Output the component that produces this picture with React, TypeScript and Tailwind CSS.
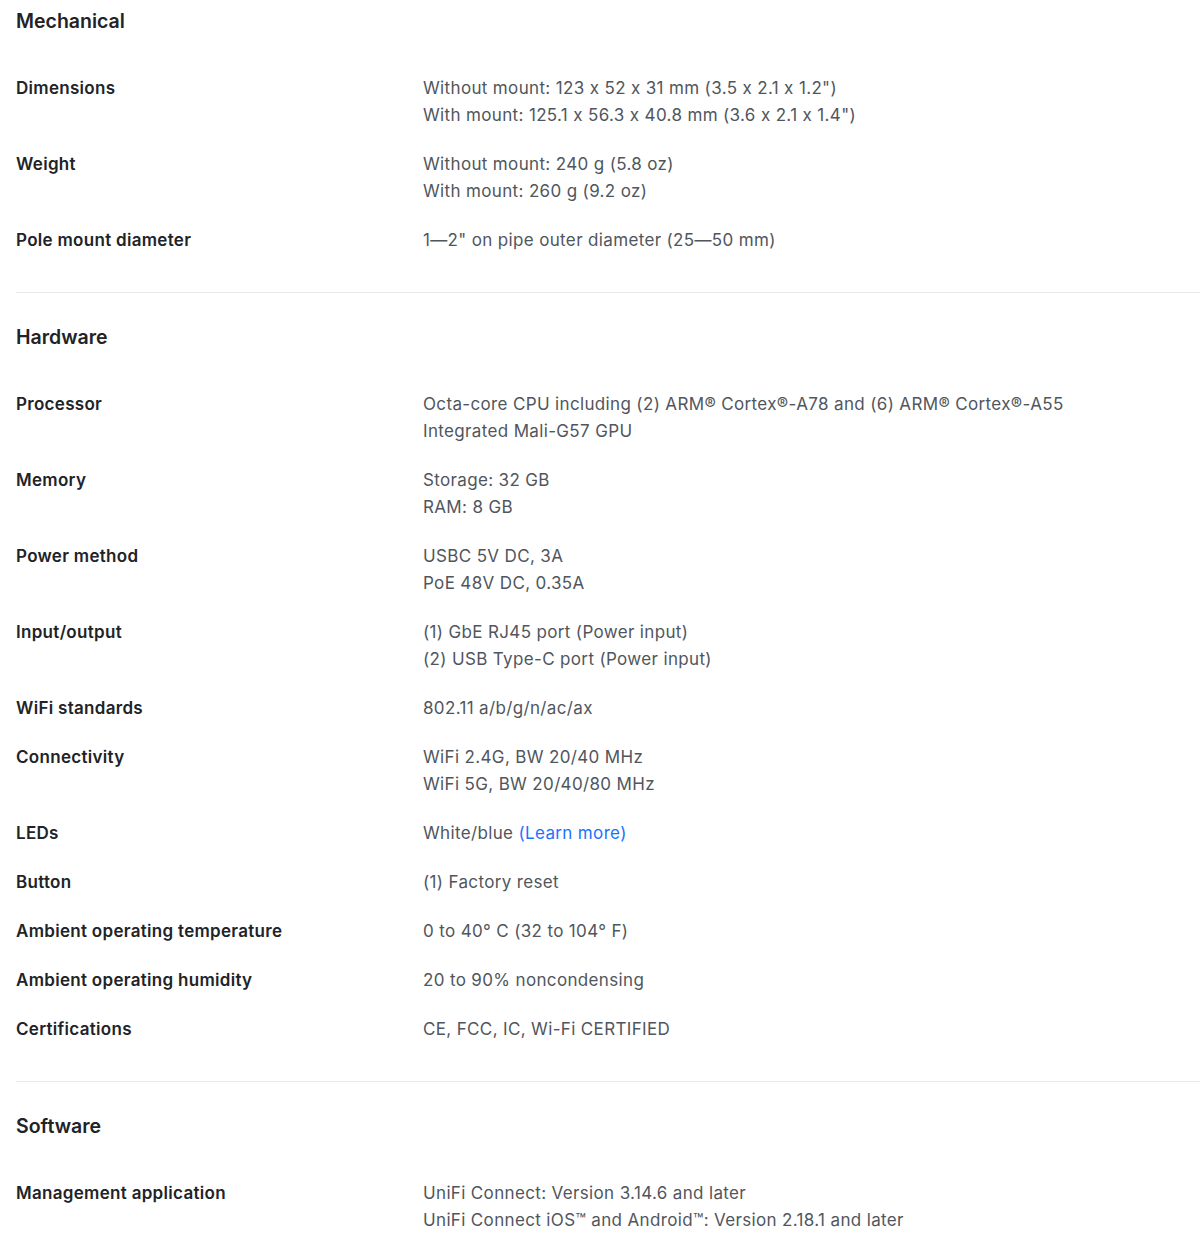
import React from "react";

type Row = { label: string; lines: React.ReactNode[] };
type Section = { title: string; rows: Row[] };

const sections: Section[] = [
  {
    title: "Mechanical",
    rows: [
      {
        label: "Dimensions",
        lines: [
          'Without mount: 123 x 52 x 31 mm (3.5 x 2.1 x 1.2")',
          'With mount: 125.1 x 56.3 x 40.8 mm (3.6 x 2.1 x 1.4")',
        ],
      },
      {
        label: "Weight",
        lines: ["Without mount: 240 g (5.8 oz)", "With mount: 260 g (9.2 oz)"],
      },
      {
        label: "Pole mount diameter",
        lines: ['1\u20142" on pipe outer diameter (25\u201450 mm)'],
      },
    ],
  },
  {
    title: "Hardware",
    rows: [
      {
        label: "Processor",
        lines: [
          "Octa-core CPU including (2) ARM\u00ae Cortex\u00ae-A78 and (6) ARM\u00ae Cortex\u00ae-A55",
          "Integrated Mali-G57 GPU",
        ],
      },
      { label: "Memory", lines: ["Storage: 32 GB", "RAM: 8 GB"] },
      { label: "Power method", lines: ["USBC 5V DC, 3A", "PoE 48V DC, 0.35A"] },
      {
        label: "Input/output",
        lines: ["(1) GbE RJ45 port (Power input)", "(2) USB Type-C port (Power input)"],
      },
      { label: "WiFi standards", lines: ["802.11 a/b/g/n/ac/ax"] },
      {
        label: "Connectivity",
        lines: ["WiFi 2.4G, BW 20/40 MHz", "WiFi 5G, BW 20/40/80 MHz"],
      },
      {
        label: "LEDs",
        lines: [
          <>
            White/blue <span className="text-[#1a73ff]">(Learn more)</span>
          </>,
        ],
      },
      { label: "Button", lines: ["(1) Factory reset"] },
      { label: "Ambient operating temperature", lines: ["0 to 40\u00b0 C (32 to 104\u00b0 F)"] },
      { label: "Ambient operating humidity", lines: ["20 to 90% noncondensing"] },
      { label: "Certifications", lines: ["CE, FCC, IC, Wi-Fi CERTIFIED"] },
    ],
  },
  {
    title: "Software",
    rows: [
      {
        label: "Management application",
        lines: [
          "UniFi Connect: Version 3.14.6 and later",
          "UniFi Connect iOS\u2122 and Android\u2122: Version 2.18.1 and later",
        ],
      },
    ],
  },
];

export default function App() {
  return (
    <div
      className="bg-white w-[1200px] min-h-[1255px] pl-4"
      style={{ fontFamily: "Inter, 'Noto Sans', sans-serif" }}
    >
      {sections.map((s, i) => (
        <div
          key={s.title}
          className={
            i < sections.length - 1
              ? "border-b border-[#e9e9e9] pb-[38px] " + (i === 0 ? "pt-[7px]" : "pt-[30px]")
              : "pt-[30px]"
          }
        >
          <h2 className="text-[19.5px] leading-[28px] font-semibold text-[#212327] mb-[40px]">
            {s.title}
          </h2>
          <div className="flex flex-col gap-[22px]">
            {s.rows.map((r) => (
              <div key={r.label} className="flex">
                <div className="w-[407px] shrink-0 text-[17px] leading-[27px] tracking-[0.3px] font-semibold text-[#212327]">
                  {r.label}
                </div>
                <div className="flex flex-col text-[17px] leading-[27px] tracking-[0.35px] text-[#50565e]">
                  {r.lines.map((l, j) => (
                    <div key={j}>{l}</div>
                  ))}
                </div>
              </div>
            ))}
          </div>
        </div>
      ))}
    </div>
  );
}
